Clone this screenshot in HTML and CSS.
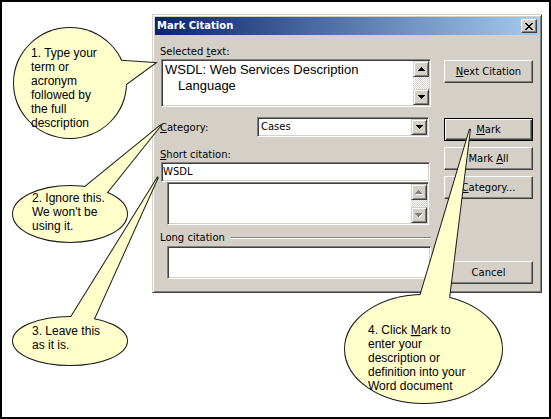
FILE: index.html
```html
<!DOCTYPE html>
<html>
<head>
<meta charset="utf-8">
<title>Mark Citation</title>
<link rel="stylesheet" href="styles.css">
</head>
<body>
<div class="page">
  <div class="dialog">
    <div class="titlebar">
      <span class="title">Mark Citation</span>
      <span class="close"><svg width="8" height="7" viewBox="0 0 8 7"><path d="M0 0h2v1H0z M6 0h2v1H6z M1 1h2v1H1z M5 1h2v1H5z M2 2h4v1H2z M3 3h2v1H3z M2 4h4v1H2z M1 5h2v1H1z M5 5h2v1H5z M0 6h2v1H0z M6 6h2v1H6z" fill="#000"/></svg></span>
    </div>
    <div class="dbody">
      <div class="leftcol">
        <div class="label lbl-sel">Selected <u>t</u>ext:</div>
        <div class="sunken selbox">
          <div class="seltext">WSDL: Web Services Description<br>Language</div>
          <div class="vscroll">
            <span class="sbtn"><svg width="7" height="4" viewBox="0 0 7 4"><path d="M3 0h1v1h1v1h1v1h1v1h-7v-1h1v-1h1v-1h1z" fill="#000"/></svg></span>
            <span class="track"></span>
            <span class="sbtn"><svg width="7" height="4" viewBox="0 0 7 4"><path d="M0 0h7v1h-1v1h-1v1h-1v1h-1v-1h-1v-1h-1v-1h-1z" fill="#000"/></svg></span>
          </div>
        </div>
        <div class="catrow">
          <div class="label catlabel"><u>C</u>ategory:</div>
          <div class="sunken combo">
            <span class="comboval">Cases</span>
            <span class="sbtn"><svg width="7" height="4" viewBox="0 0 7 4"><path d="M0 0h7v1h-1v1h-1v1h-1v1h-1v-1h-1v-1h-1v-1h-1z" fill="#000"/></svg></span>
          </div>
        </div>
        <div class="label lbl-short"><u>S</u>hort citation:</div>
        <div class="sunken edit">WSDL</div>
        <div class="sunken listbox">
          <div class="listarea"></div>
          <div class="vscroll">
            <span class="sbtn"><svg width="8" height="5" viewBox="0 0 8 5"><path transform="translate(1 1)" d="M3 0h1v1h1v1h1v1h1v1h-7v-1h1v-1h1v-1h1z" fill="#fff"/><path d="M3 0h1v1h1v1h1v1h1v1h-7v-1h1v-1h1v-1h1z" fill="#808080"/></svg></span>
            <span class="track"></span>
            <span class="sbtn"><svg width="8" height="5" viewBox="0 0 8 5"><path transform="translate(1 1)" d="M0 0h7v1h-1v1h-1v1h-1v1h-1v-1h-1v-1h-1v-1h-1z" fill="#fff"/><path d="M0 0h7v1h-1v1h-1v1h-1v1h-1v-1h-1v-1h-1v-1h-1z" fill="#808080"/></svg></span>
          </div>
        </div>
        <div class="longrow">
          <span class="label">Long citation</span>
          <span class="etch"></span>
        </div>
        <div class="sunken longbox"></div>
      </div>
      <div class="rightcol">
        <button class="btn b-next"><u>N</u>ext Citation</button>
        <button class="btn b-mark"><u>M</u>ark</button>
        <button class="btn b-all">Mark <u>A</u>ll</button>
        <button class="btn b-cat"><u>C</u>ategory...</button>
        <button class="btn b-cancel">Cancel</button>
      </div>
    </div>
  </div>

  <svg class="callouts" width="551" height="419" viewBox="0 0 551 419">
    <g class="strokes">
      <ellipse cx="70" cy="83" rx="56" ry="55"/>
      <polygon points="155,63 110,60 118,90"/>
      <ellipse cx="70" cy="214" rx="57" ry="28"/>
      <polygon points="161,125 80,191 101,200"/>
      <ellipse cx="70" cy="341" rx="57" ry="24"/>
      <polygon points="158,177 63,330 89,330"/>
      <ellipse cx="423.5" cy="349" rx="78.5" ry="54"/>
      <polygon points="470,129 413,320 446,323"/>
    </g>
    <g class="fills">
      <ellipse cx="70" cy="83" rx="56" ry="55"/>
      <polygon points="155,63 110,60 118,90"/>
      <ellipse cx="70" cy="214" rx="57" ry="28"/>
      <polygon points="161,125 80,191 101,200"/>
      <ellipse cx="70" cy="341" rx="57" ry="24"/>
      <polygon points="158,177 63,330 89,330"/>
      <ellipse cx="423.5" cy="349" rx="78.5" ry="54"/>
      <polygon points="470,129 413,320 446,323"/>
    </g>
    <text class="ctext" x="31" y="57">
      <tspan x="31" y="57">1. Type your</tspan>
      <tspan x="31" y="71">term or</tspan>
      <tspan x="31" y="85">acronym</tspan>
      <tspan x="31" y="99">followed by</tspan>
      <tspan x="31" y="113">the full</tspan>
      <tspan x="31" y="127">description</tspan>
    </text>
    <text class="ctext" x="32" y="202">
      <tspan x="32" y="202">2. Ignore this.</tspan>
      <tspan x="32" y="216">We won't be</tspan>
      <tspan x="32" y="230">using it.</tspan>
    </text>
    <text class="ctext" x="32" y="335">
      <tspan x="32" y="335">3. Leave this</tspan>
      <tspan x="32" y="349">as it is.</tspan>
    </text>
    <text class="ctext" x="368" y="334">
      <tspan x="368" y="334">4. Click <tspan class="ul">M</tspan>ark to</tspan>
      <tspan x="368" y="348">enter your</tspan>
      <tspan x="368" y="362">description or</tspan>
      <tspan x="368" y="376">definition into your</tspan>
      <tspan x="368" y="390">Word document</tspan>
    </text>
  </svg>
</div>
</body>
</html>
```

FILE: styles.css
```css
* { box-sizing: border-box; }

body {
  margin: 0;
  background: #fff;
}

.page {
  position: relative;
  width: 551px;
  height: 419px;
  border: 2px solid #000;
  background: #fff;
  overflow: hidden;
}

.dialog {
  margin: 12px 0 0 150px;
  width: 390px;
  height: 279px;
  border: 1px solid;
  border-color: #d4d0c8 #404040 #404040 #d4d0c8;
  box-shadow: inset 1px 1px #fff, inset -1px -1px #808080;
  padding: 2px;
  background: #d4d0c8;
  font-family: "DejaVu Sans", sans-serif;
  font-size: 10px;
  color: #000;
  display: flex;
  flex-direction: column;
}

.titlebar {
  height: 18px;
  flex: none;
  background: linear-gradient(to right, #0a246a, #a6caf0);
  display: flex;
  align-items: center;
  justify-content: space-between;
  padding: 0 2px;
}

.title {
  color: #fff;
  font-weight: bold;
  font-size: 10px;
  line-height: 18px;
}

.close {
  width: 16px;
  height: 14px;
  display: flex;
  align-items: center;
  justify-content: center;
  background: #d4d0c8;
  border: 1px solid;
  border-color: #fff #404040 #404040 #fff;
  box-shadow: inset -1px -1px #808080;
}
.close svg { display: block; margin-top: 1px; }

.dbody {
  display: flex;
  padding: 0 6px 0 5px;
  gap: 13px;
}

.leftcol {
  width: 271px;
  display: flex;
  flex-direction: column;
  align-items: flex-start;
}

.label {
  line-height: 13px;
  white-space: nowrap;
}

.lbl-sel { margin-top: 10px; }

.sunken {
  border: 1px solid;
  border-color: #808080 #fff #fff #808080;
  box-shadow: inset 1px 1px #404040, inset -1px -1px #d4d0c8;
  padding: 1px;
  background: #fff;
}

.selbox {
  margin: 1px 0 0 1px;
  width: 270px;
  height: 48px;
  display: flex;
}

.seltext {
  flex: 1;
  font-family: "Liberation Sans", Arial, sans-serif;
  font-size: 13px;
  line-height: 16px;
  padding: 1px 0 0 15px;
  text-indent: -13px;
}

.vscroll {
  width: 16px;
  flex: none;
  display: flex;
  flex-direction: column;
}

.sbtn {
  width: 16px;
  height: 16px;
  flex: none;
  display: flex;
  align-items: center;
  justify-content: center;
  background: #d4d0c8;
  border: 1px solid;
  border-color: #d4d0c8 #404040 #404040 #d4d0c8;
  box-shadow: inset 1px 1px #fff, inset -1px -1px #808080;
}
.sbtn svg { display: block; }

.track {
  flex: 1;
  background: repeating-conic-gradient(#fff 0 25%, #d4d0c8 0 50%) 0 0 / 2px 2px;
}

.catrow {
  margin-top: 10px;
  width: 271px;
  height: 20px;
  display: flex;
  align-items: center;
}

.catlabel { width: 97px; }

.combo {
  width: 172px;
  height: 20px;
  display: flex;
  align-items: center;
}

.comboval {
  flex: 1;
  padding-left: 2px;
  line-height: 16px;
}

.lbl-short { margin-top: 11px; }

.edit {
  margin: 1px 0 0 1px;
  width: 269px;
  height: 20px;
  line-height: 16px;
  padding: 1px 1px;
}

.listbox {
  margin-left: 7px;
  width: 262px;
  height: 43px;
  display: flex;
}

.listarea { flex: 1; }

.longrow {
  margin-top: 6px;
  width: 271px;
  display: flex;
  align-items: center;
}

.etch {
  flex: 1;
  margin-left: 6px;
  height: 2px;
  border-top: 1px solid #808080;
  border-bottom: 1px solid #fff;
}

.longbox {
  margin: 2px 0 0 7px;
  width: 264px;
  height: 33px;
}

.rightcol {
  width: 89px;
  display: flex;
  flex-direction: column;
}

.btn {
  width: 89px;
  height: 23px;
  padding: 0;
  font-family: inherit;
  font-size: 10px;
  color: #000;
  background: #d4d0c8;
  border: 1px solid;
  border-color: #fff #404040 #404040 #fff;
  box-shadow: inset -1px -1px #808080, inset 1px 1px #d4d0c8;
  text-align: center;
}

.b-next { margin-top: 25px; }
.b-mark {
  margin-top: 35px;
  border-color: #000;
  box-shadow: inset 1px 1px #fff, inset -1px -1px #404040, inset -2px -2px #808080;
}
.b-all { margin-top: 6px; }
.b-cat { margin-top: 6px; }
.b-cancel { margin-top: 62px; }

.callouts {
  position: absolute;
  left: -2px;
  top: -2px;
  pointer-events: none;
}

.strokes ellipse,
.strokes polygon {
  fill: #ffffcc;
  stroke: #1a1a1a;
  stroke-width: 2;
}

.fills ellipse,
.fills polygon {
  fill: #ffffcc;
}

.ctext {
  font-family: "Liberation Sans", Arial, sans-serif;
  font-size: 12px;
  fill: #000;
}

.ul { text-decoration: underline; }
```
